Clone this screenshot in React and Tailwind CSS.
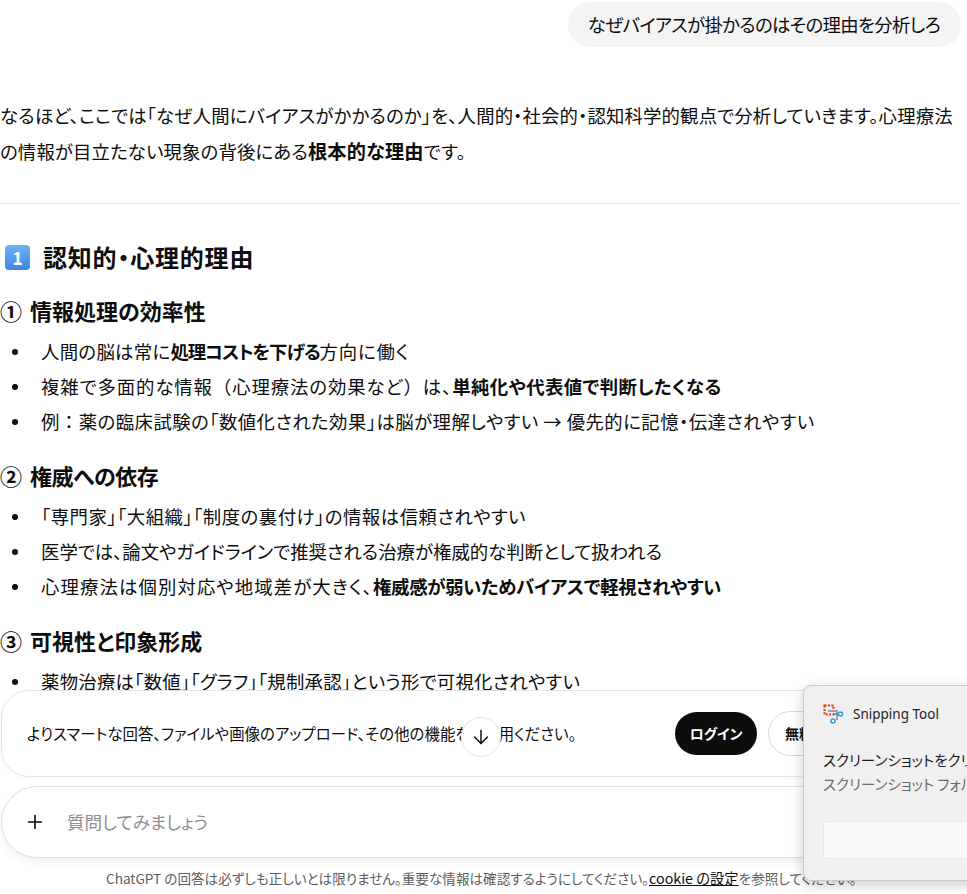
import { ArrowDown, Plus } from "lucide-react";

function Bullets({ items }) {
  return (
    <ul className="flex flex-col">
      {items.map((item, i) => (
        <li key={i} className="flex h-[35px] items-center">
          <span className="ml-[12px] mr-[23px] h-[6px] w-[6px] shrink-0 rounded-full bg-[#0d0d0d]"></span>
          <span className="whitespace-nowrap">{item}</span>
        </li>
      ))}
    </ul>
  );
}

function SnipIcon() {
  return (
    <svg width="22" height="20" viewBox="0 0 22 20" fill="none">
      <rect x="1.5" y="1.5" width="9" height="9" stroke="#d83b01" strokeWidth="2" strokeDasharray="2 1.4" />
      <path d="M5 7h9v9" stroke="#9aa3ad" strokeWidth="2" />
      <path d="M10 10h6" stroke="#6f7b87" strokeWidth="1.5" />
      <circle cx="17.5" cy="10" r="2" stroke="#2b9be8" strokeWidth="1.5" fill="#fff" />
      <circle cx="10" cy="17" r="2" stroke="#2b9be8" strokeWidth="1.5" fill="#fff" />
    </svg>
  );
}

export default function App() {
  return (
    <div className="relative h-[894px] w-[967px] overflow-hidden bg-white font-['Noto_Sans_CJK_JP','Noto_Sans',sans-serif] text-[18.4px] text-[#0d0d0d] [font-feature-settings:'palt']">
      <div className="flex justify-end pr-[6px] pt-[2px]">
        <div className="flex h-[45px] items-center rounded-[22px] bg-[#f4f4f4] pl-[20px] pr-[21px] tracking-[-0.7px]">
          なぜバイアスが掛かるのはその理由を分析しろ
        </div>
      </div>

      <div className="w-[961px] pt-[51px]">
        <p className="leading-[35.5px] tracking-[0.14px]">
          なるほど、ここでは「なぜ人間にバイアスがかかるのか」を、人間的・社会的・認知科学的観点で分析していきます。心理療法の情報が目立たない現象の背後にある
          <b className="text-[19.2px] font-bold">根本的な理由</b>
          <span className="tracking-[0.6px]">です。</span>
        </p>
        <hr className="mt-[34px] border-[#e3e3e3]" />

        <h2 className="mt-[35px] flex h-[36px] items-center text-[24px] font-bold tracking-[0.8px]">
          <span className="ml-[5px] mr-[13px] flex h-[25px] w-[25px] items-center justify-center rounded-[4px] bg-gradient-to-b from-[#6fb1f5] to-[#3f86e6] text-[18px] font-bold tracking-normal text-white">
            1
          </span>
          認知的・心理的理由
        </h2>

        <h3 className="mb-[6px] mt-[18px] flex h-[35px] items-center text-[22px] font-bold">
          <span className="mr-[8px]">①</span>情報処理の効率性
        </h3>
        <Bullets
          items={[
            <>
              <span className="tracking-[0.3px]">人間の脳は常に</span>
              <b className="tracking-[-1.1px]">処理コストを下げる</b>
              <span className="tracking-[0.8px]">方向に働く</span>
            </>,
            <>
              <span className="tracking-[0.9px]">
                複雑で多面的な情報<span className="[font-feature-settings:normal]">（</span>心理療法の効果など<span className="[font-feature-settings:normal]">）</span>は、
              </span>
              <b className="tracking-[0.4px]">単純化や代表値で判断したくなる</b>
            </>,
            <span className="tracking-[0.45px]">
              例<span className="[font-feature-settings:normal]">：</span>薬の臨床試験の「数値化された効果」は脳が理解しやすい → 優先的に記憶・伝達されやすい
            </span>,
          ]}
        />

        <h3 className="mb-[6px] mt-[19px] flex h-[35px] items-center text-[22px] font-bold">
          <span className="mr-[8px]">②</span>
          <span className="tracking-[-0.5px]">権威への依存</span>
        </h3>
        <Bullets
          items={[
            <span className="tracking-[0.5px]">「専門家」「大組織」「制度の裏付け」の情報は信頼されやすい</span>,
            "医学では、論文やガイドラインで推奨される治療が権威的な判断として扱われる",
            <>
              <span className="tracking-[1.1px]">心理療法は個別対応や地域差が大きく、</span>
              <b className="tracking-[-0.35px]">権威感が弱いためバイアスで軽視されやすい</b>
            </>,
          ]}
        />

        <h3 className="mb-[6px] mt-[19px] flex h-[35px] items-center text-[22px] font-bold">
          <span className="mr-[8px]">③</span>可視性と印象形成
        </h3>
        <Bullets items={[<span className="tracking-[0.25px]">薬物治療は「数値」「グラフ」「規制承認」という形で可視化されやすい</span>]} />
      </div>

      {/* 下に固定されるログイン案内と入力欄 */}
      <div className="absolute inset-x-0 bottom-0 h-[204px] bg-white">
        <div className="ml-[1px] flex h-[87px] w-[1000px] items-center rounded-[28px] border border-[#e5e5e5] bg-white pl-[25px] shadow-[0_1px_4px_rgba(0,0,0,0.04)]">
          <span className="w-[648px] shrink-0 whitespace-nowrap text-[15.4px] tracking-[0.05px]">
            よりスマートな回答、ファイルや画像のアップロード、その他の機能をご利用ください。
          </span>
          <button className="h-[43px] w-[82px] shrink-0 rounded-full bg-[#0d0d0d] text-[14px] font-bold text-white">
            ログイン
          </button>
          <button className="ml-[11px] h-[45px] w-[120px] shrink-0 rounded-full border border-[#d9d9d9] bg-white pl-[16px] text-left text-[14px] font-bold">
            無料で
          </button>
        </div>

        <div className="ml-[1px] mt-[9px] flex h-[72px] w-[1000px] items-center rounded-[36px] border border-[#e0e0e0] bg-white shadow-[0_4px_10px_rgba(0,0,0,0.06)]">
          <Plus className="ml-[22px] h-[22px] w-[22px]" strokeWidth={1.8} />
          <span className="ml-[21px] text-[17.6px] text-[#8f8f8f]">質問してみましょう</span>
        </div>

        <p className="mt-[9px] whitespace-nowrap pl-[106px] text-[13.6px] text-[#5d5d5d]">
          ChatGPT の回答は必ずしも正しいとは限りません。重要な情報は確認するようにしてください。
          <span className="text-[14.3px] text-[#0d0d0d] underline">cookie の設定</span>を参照してください。
        </p>
      </div>

      <button className="absolute left-[461px] top-[717px] flex h-[40px] w-[40px] items-center justify-center rounded-full border border-[#e5e5e5] bg-white">
        <ArrowDown className="h-[22px] w-[22px]" strokeWidth={1.6} />
      </button>

      {/* Snipping Tool の通知 */}
      <div className="absolute left-[803px] top-[685px] h-[196px] w-[300px] rounded-[8px] border border-[#c9c9c9] bg-[#f0f0f0] pl-[19px] pt-[17px] shadow-[0_4px_14px_rgba(0,0,0,0.2)]">
        <div className="flex h-[22px] items-center gap-[8px] text-[13.5px] text-[#1f1f1f]">
          <SnipIcon />
          <span className="font-['Noto_Sans',sans-serif]">Snipping Tool</span>
        </div>
        <div className="mt-[23px] whitespace-nowrap text-[14.5px] leading-[24px] text-[#1a1a1a]">スクリーンショットをクリップボードにコピーしました</div>
        <div className="whitespace-nowrap text-[14.5px] leading-[24px] text-[#6b6b6b]">スクリーンショット フォルダーに自動的に保存されました</div>
        <div className="mt-[25px] h-[38px] w-[260px] rounded-[4px] border border-[#e6e6e6] bg-[#fafafa]"></div>
      </div>
    </div>
  );
}
